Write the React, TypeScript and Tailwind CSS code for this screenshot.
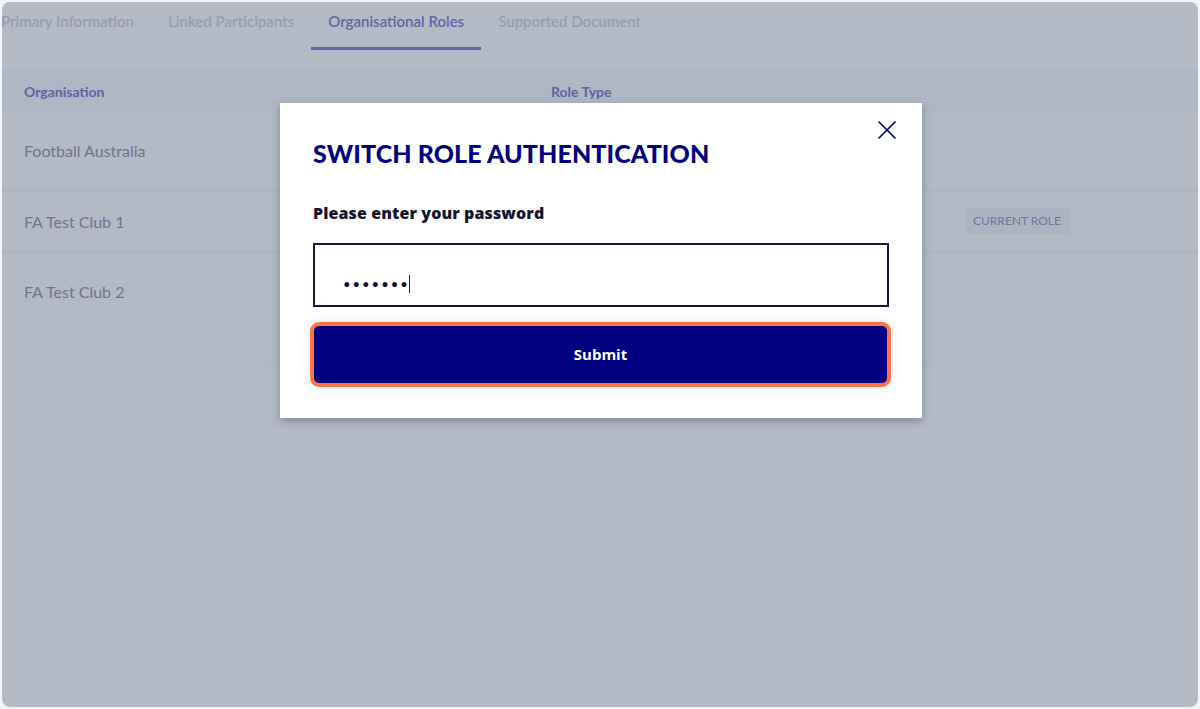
import { X } from 'lucide-react'

const tabs = [
  { label: 'Primary Information', active: false },
  { label: 'Linked Participants', active: false },
  { label: 'Organisational Roles', active: true },
  { label: 'Supported Document', active: false },
]

const rows = [
  { name: 'Football Australia', current: false },
  { name: 'FA Test Club 1', current: true },
  { name: 'FA Test Club 2', current: false },
]

export default function App() {
  return (
    <div className="w-[1200px] h-[709px] bg-[#f3f4f7] p-[2px] font-['Lato',sans-serif]">
      <div className="relative w-full h-full rounded-[8px] overflow-hidden bg-[#b4bac6]">
        {/* Tabs */}
        <div className="flex h-[50px] -ml-[18px]">
          {tabs.map((t) => (
            <div
              key={t.label}
              className={
                'relative flex items-start pt-[8px] px-[17px] text-[15px] font-semibold whitespace-nowrap ' +
                (t.active ? 'text-[#5d65a2]' : 'text-[#969db3]')
              }
            >
              {t.label}
              {t.active && <span className="absolute left-0 right-0 bottom-[2px] h-[3px] bg-[#6167a4]" />}
            </div>
          ))}
        </div>

        {/* Table */}
        <div className="mt-[18px] bg-[#b3b9c5]">
          <div className="flex items-center h-[42px] bg-[#b0b7c4] text-[14px] font-bold text-[#5c64a0]">
            <div className="w-[549px] pl-[22px]">Organisation</div>
            <div>Role Type</div>
          </div>
          {rows.map((r, i) => (
            <div
              key={r.name}
              className={
                'flex items-center text-[16px] text-[#6c7490] ' +
                (i === 0 ? 'h-[79px]' : i === 1 ? 'h-[62px]' : 'h-[78px]') +
                (i < 2 ? ' border-b border-[#a9b0bd]' : '')
              }
            >
              <div className="w-[963px] pl-[22px]">{r.name}</div>
              {r.current && (
                <span className="px-[8px] h-[26px] flex items-center bg-[#adb3c0] text-[12px] text-[#6b73a1] mb-[2px]">
                  CURRENT ROLE
                </span>
              )}
            </div>
          ))}
          <div className="h-[36px] border-b border-[#acb3c0]" />
        </div>

        {/* Modal */}
        <div className="absolute left-[278px] top-[101px] w-[642px] h-[315px] bg-white shadow-[0_3px_8px_rgba(30,40,60,0.35)] px-[33px] pt-[35px]">
          <button className="absolute right-[19px] top-[11px] text-[#000080]">
            <X size={32} strokeWidth={1.3} />
          </button>
          <h2 className="text-[25px] leading-[30px] font-black text-[#000080] tracking-[0.1px]">
            SWITCH ROLE AUTHENTICATION
          </h2>
          <p className="mt-[33px] text-[16px] font-extrabold text-[#14142e] font-['Open_Sans',sans-serif] tracking-[0.1px]">
            Please enter your password
          </p>
          <div className="mt-[18px] h-[64px] border-2 border-[#15153f] flex items-center pl-[28px] pt-[18px]">
            <span className="text-[13px] tracking-[2px] text-[#0a0a30] leading-none">•••••••</span>
            <span className="w-[1px] h-[18px] bg-[#222] -ml-[1px]" />
          </div>
          <button className="mt-[15px] -mx-[3px] w-[581px] h-[65px] rounded-[9px] border-[4px] border-[#ff7246] bg-[#000080] text-white text-[15px] font-bold font-['Open_Sans',sans-serif] shadow-[0_0_14px_rgba(120,130,200,0.15)]">
            Submit
          </button>
        </div>
      </div>
    </div>
  )
}
